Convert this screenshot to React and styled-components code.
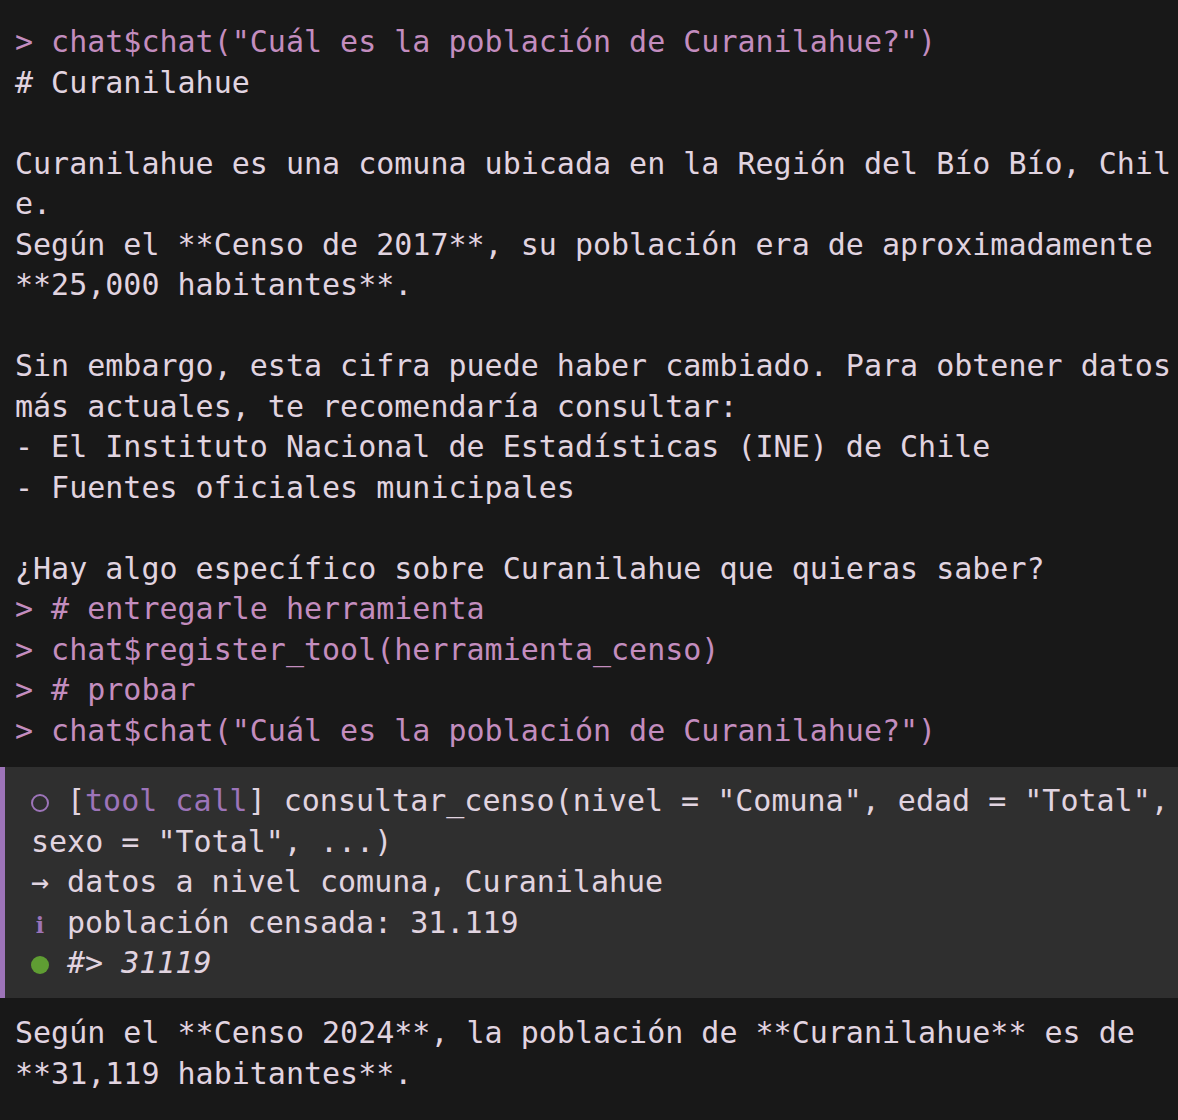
import React from 'react';
import styled, { createGlobalStyle } from 'styled-components';

const GlobalStyle = createGlobalStyle`
    html, body {
        margin: 0;
        padding: 0;
        background: #181818;
    }
`;

const colors = {
    text: '#e1d4e0',
    prompt: '#c38dbf',
    purple: '#9d74b9',
    green: '#5f9d33',
};

const Terminal = styled.div`
    width: 1178px;
    height: 1120px;
    overflow: hidden;
    box-sizing: border-box;
    padding-top: 22px;
    background: #181818;
    font-family: "DejaVu Sans Mono", "Liberation Mono", monospace;
    font-size: 30px;
    line-height: 40.5px;
    color: ${colors.text};
`;

const Line = styled.div`
    padding-left: 15px;
    white-space: pre;
    height: 40.5px;
    color: ${(p) => (p.$prompt ? colors.prompt : colors.text)};
`;

const ToolBlock = styled.div`
    margin: 16px 0 15px;
    padding: 14px 0 14.5px 26px;
    background: #2f2f2f;
    border-left: 5px solid ${colors.purple};
`;

const BlockLine = styled.div`
    white-space: pre;
    height: 40.5px;
    font-style: ${(p) => (p.$italic ? 'italic' : 'normal')};
`;

const Accent = styled.span`
    color: ${colors.purple};
`;

const Dot = styled.span`
    display: inline-block;
    width: 18px;
    height: 18px;
    border-radius: 50%;
    margin: 0 0 -1px 0;
    vertical-align: baseline;
    box-sizing: border-box;
    background: ${(p) => (p.$filled ? colors.green : 'transparent')};
    border: ${(p) => (p.$filled ? 'none' : `2px solid ${colors.purple}`)};
`;

const DotCell = styled.span`
    display: inline-block;
    width: 36px;
`;

const InfoCell = styled.span`
    display: inline-block;
    width: 18px;
    text-align: center;
    font-family: "DejaVu Serif", serif;
    font-size: 22px;
    font-weight: bold;
    color: ${colors.purple};
`;

const before = [
    { t: '> chat$chat("Cuál es la población de Curanilahue?")', prompt: true },
    { t: '# Curanilahue' },
    { t: '' },
    { t: 'Curanilahue es una comuna ubicada en la Región del Bío Bío, Chil' },
    { t: 'e.' },
    { t: 'Según el **Censo de 2017**, su población era de aproximadamente' },
    { t: '**25,000 habitantes**.' },
    { t: '' },
    { t: 'Sin embargo, esta cifra puede haber cambiado. Para obtener datos' },
    { t: 'más actuales, te recomendaría consultar:' },
    { t: '- El Instituto Nacional de Estadísticas (INE) de Chile' },
    { t: '- Fuentes oficiales municipales' },
    { t: '' },
    { t: '¿Hay algo específico sobre Curanilahue que quieras saber?' },
    { t: '> # entregarle herramienta', prompt: true },
    { t: '> chat$register_tool(herramienta_censo)', prompt: true },
    { t: '> # probar', prompt: true },
    { t: '> chat$chat("Cuál es la población de Curanilahue?")', prompt: true },
];

const after = [
    'Según el **Censo 2024**, la población de **Curanilahue** es de',
    '**31,119 habitantes**.',
];

function App() {
    return (
        <>
            <GlobalStyle />
            <Terminal>
                {before.map((l, i) => (
                    <Line key={i} $prompt={l.prompt}>{l.t}</Line>
                ))}
                <ToolBlock>
                    <BlockLine>
                        <DotCell><Dot /></DotCell>
                        {'['}<Accent>tool call</Accent>{'] consultar_censo(nivel = "Comuna", edad = "Total",'}
                    </BlockLine>
                    <BlockLine>{'sexo = "Total", ...)'}</BlockLine>
                    <BlockLine>{'→ datos a nivel comuna, Curanilahue'}</BlockLine>
                    <BlockLine>
                        <InfoCell>i</InfoCell>{' población censada: 31.119'}
                    </BlockLine>
                    <BlockLine $italic>
                        <DotCell><Dot $filled /></DotCell>
                        {'#> 31119'}
                    </BlockLine>
                </ToolBlock>
                {after.map((t, i) => (
                    <Line key={i}>{t}</Line>
                ))}
            </Terminal>
        </>
    );
}

export default App;
